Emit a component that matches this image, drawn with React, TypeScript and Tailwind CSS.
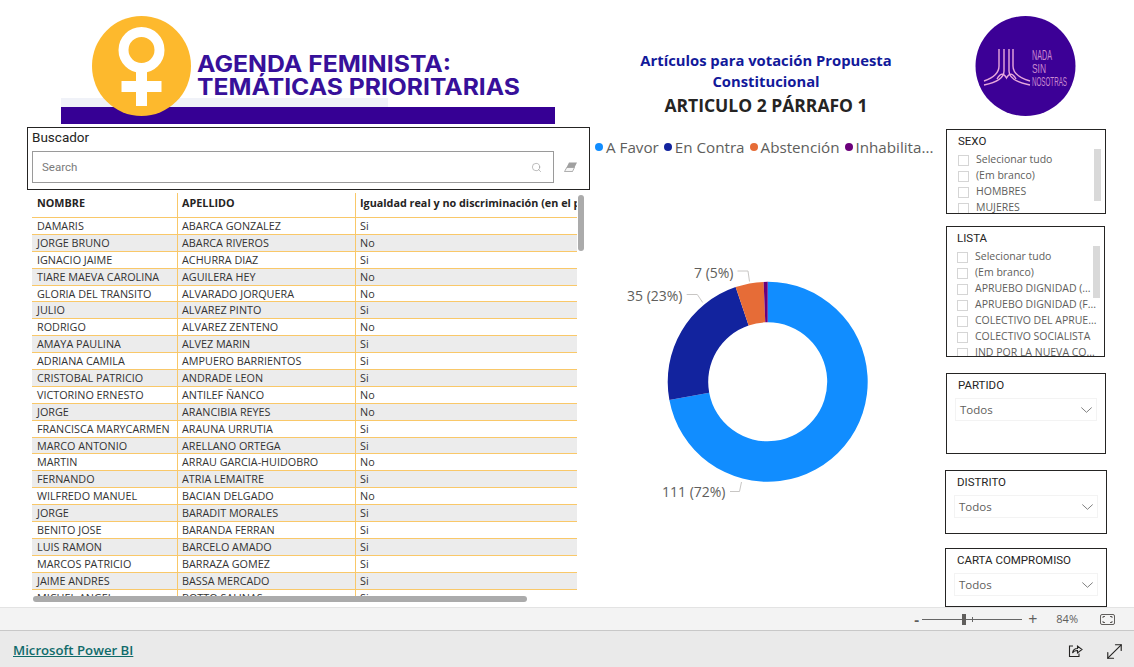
import { MoveDiagonal, Search } from "lucide-react";

const filas = [
  ["DAMARIS", "ABARCA GONZALEZ", "Si"],
  ["JORGE BRUNO", "ABARCA RIVEROS", "No"],
  ["IGNACIO JAIME", "ACHURRA DIAZ", "Si"],
  ["TIARE MAEVA CAROLINA", "AGUILERA HEY", "No"],
  ["GLORIA DEL TRANSITO", "ALVARADO JORQUERA", "No"],
  ["JULIO", "ALVAREZ PINTO", "Si"],
  ["RODRIGO", "ALVAREZ ZENTENO", "No"],
  ["AMAYA PAULINA", "ALVEZ MARIN", "Si"],
  ["ADRIANA CAMILA", "AMPUERO BARRIENTOS", "Si"],
  ["CRISTOBAL PATRICIO", "ANDRADE LEON", "Si"],
  ["VICTORINO ERNESTO", "ANTILEF ÑANCO", "No"],
  ["JORGE", "ARANCIBIA REYES", "No"],
  ["FRANCISCA MARYCARMEN", "ARAUNA URRUTIA", "Si"],
  ["MARCO ANTONIO", "ARELLANO ORTEGA", "Si"],
  ["MARTIN", "ARRAU GARCIA-HUIDOBRO", "No"],
  ["FERNANDO", "ATRIA LEMAITRE", "Si"],
  ["WILFREDO MANUEL", "BACIAN DELGADO", "No"],
  ["JORGE", "BARADIT MORALES", "Si"],
  ["BENITO JOSE", "BARANDA FERRAN", "Si"],
  ["LUIS RAMON", "BARCELO AMADO", "Si"],
  ["MARCOS PATRICIO", "BARRAZA GOMEZ", "Si"],
  ["JAIME ANDRES", "BASSA MERCADO", "Si"],
  ["MICHEL ANGEL", "BOTTO SALINAS", "Si"],
];

const leyenda = [
  { label: "A Favor", color: "bg-[#118dff]" },
  { label: "En Contra", color: "bg-[#12239e]" },
  { label: "Abstención", color: "bg-[#e66c37]" },
  { label: "Inhabilita...", color: "bg-[#6b007b]" },
];

const segmentos = [
  { value: 111, color: "#118dff" },
  { value: 35, color: "#12239e" },
  { value: 7, color: "#e66c37" },
  { value: 1, color: "#6b007b" },
];

function arco(inicio: number, fin: number) {
  const cx = 177.7;
  const cy = 181.8;
  const R = 100;
  const r = 59.5;
  const p = (rad: number, a: number) =>
    `${(cx + rad * Math.sin(a)).toFixed(2)} ${(cy - rad * Math.cos(a)).toFixed(2)}`;
  const large = fin - inicio > Math.PI ? 1 : 0;
  return `M${p(R, inicio)} A${R} ${R} 0 ${large} 1 ${p(R, fin)} L${p(r, fin)} A${r} ${r} 0 ${large} 0 ${p(r, inicio)} Z`;
}

function Donut() {
  const total = 154;
  let acum = 0;
  return (
    <svg width="350" height="340" className="block" style={{ fontFamily: "'Open Sans', sans-serif" }}>
      {segmentos.map((s) => {
        const a = (acum / total) * Math.PI * 2;
        acum += s.value;
        const b = (acum / total) * Math.PI * 2;
        return <path key={s.color} d={arco(a, b)} fill={s.color} />;
      })}
      <g fill="none" stroke="#c8c6c4" strokeWidth="1">
        <path d="M147.500 71 H158 L159.500 81.500" />
        <path d="M96.700 94.500 H107.300 L112.700 102.500" />
        <path d="M140 291.500 H149.500 L151.500 282" />
      </g>
      <g fill="#605e5c" fontSize="14">
        <text x="104" y="78">7 (5%)</text>
        <text x="37" y="100.500">35 (23%)</text>
        <text x="72" y="296.500">111 (72%)</text>
      </g>
    </svg>
  );
}

function Banner() {
  return (
    <svg width="562" height="108" className="block">
      <rect x="34" y="82" width="327" height="10" fill="#f0f2f8" />
      <rect x="34" y="91" width="494" height="17" fill="#360094" />
      <ellipse cx="114.500" cy="50" rx="49.500" ry="50" fill="#fdb92d" />
      <circle cx="114.500" cy="34" r="18" fill="none" stroke="#fff" strokeWidth="10" />
      <rect x="109" y="55" width="11" height="35" fill="#fff" />
      <rect x="94.500" y="65" width="40" height="11" fill="#fff" />
      <g fill="#37109a" fontWeight="700" fontFamily="Inter, sans-serif" fontSize="22.500">
        <text x="170" y="55.500" textLength="254" lengthAdjust="spacingAndGlyphs">AGENDA FEMINISTA:</text>
        <text x="170" y="79" textLength="323" lengthAdjust="spacingAndGlyphs">TEMÁTICAS PRIORITARIAS</text>
      </g>
    </svg>
  );
}

function LogoNada() {
  return (
    <svg width="101" height="100" className="block">
      <circle cx="50.500" cy="50" r="50" fill="#3c0096" />
      <g fill="none" stroke="#e8a8dc" strokeWidth="1.400">
        <path d="M24 33 V50 Q24 60 9 65" />
        <path d="M29 33 V55 Q29 65 9 69" />
        <path d="M34 33 V55 Q34 65 55 69" />
        <path d="M38 33 V50 Q38 60 55 65" />
        <path d="M22 63 Q27 54 31.500 62 Q36 54 41 63" />
      </g>
      <g fill="#c98ad0" fontFamily="'Liberation Sans', sans-serif">
        <text x="57" y="44" fontSize="14" textLength="20" lengthAdjust="spacingAndGlyphs">NADA</text>
        <text x="57" y="57" fontSize="12" textLength="14" lengthAdjust="spacingAndGlyphs">SIN</text>
        <text x="57" y="70" fontSize="12" textLength="35" lengthAdjust="spacingAndGlyphs">NOSOTRAS</text>
      </g>
    </svg>
  );
}

function CheckRow({ label }: { label: string }) {
  return (
    <div className="flex h-4 items-center gap-[7px]">
      <span className="h-[11px] w-[11px] shrink-0 border border-[#d5d5d5]" />
      <span className="whitespace-nowrap text-[10.5px] text-[#605e5c]">{label}</span>
    </div>
  );
}

function Dropdown({ w }: { w: string }) {
  return (
    <div className={`flex h-[23px] items-center justify-between border border-[#f3f3f3] pl-[4px] pr-[4px] text-[11.5px] text-[#605e5c] ${w}`}>
      <span>Todos</span>
      <svg width="11" height="6" viewBox="0 0 11 6" fill="none" stroke="#808080" strokeWidth="1">
        <path d="M0.300 0.500 L5.500 5.300 L10.700 0.500" />
      </svg>
    </div>
  );
}

function Titulo({ children }: { children: string }) {
  return (
    <div className="text-[11.5px] leading-[16px] text-[#252423]" style={{ fontFamily: "Roboto, sans-serif" }}>
      {children}
    </div>
  );
}

export default function App() {
  return (
    <div className="flex h-[667px] w-[1134px] flex-col overflow-hidden bg-white" style={{ fontFamily: "'Open Sans', sans-serif" }}>
      {/* reporte */}
      <div className="flex h-[607px] pl-[27px]">
        {/* columna izquierda */}
        <div className="w-[563px] pt-[16px]">
          <Banner />
          <div className="mt-[3px] h-[63px] border border-[#252423] px-[4px]">
            <div className="text-[13.5px] leading-[18px] text-[#252423]" style={{ fontFamily: "Roboto, sans-serif" }}>Buscador</div>
            <div className="mt-[5px] flex items-center">
              <div className="flex h-[32px] w-[522px] items-center justify-between border border-[#9a9a9a] pl-[9px] pr-[11px] pt-[1px] text-[11.5px] text-[#7a7a7a]" style={{ fontFamily: "Roboto, sans-serif" }}>
                <span>Search</span>
                <Search size={11} strokeWidth={1.2} className="text-[#8a8a8a]" />
              </div>
              <svg width="13" height="10" className="ml-[10px]" viewBox="0 0 13 10">
                <path d="M5 0.500 H13 L8.500 9.500 H0.500 Z" fill="#a0a0a0" />
                <path d="M0.500 9.500 L2.800 5.500 H10.500 L8.500 9.500 Z" fill="#f5f5f5" stroke="#8f8f8f" strokeWidth="0.6" />
              </svg>
            </div>
          </div>
          <div className="relative ml-[5px] mt-[3px] h-[410px] w-[553px] overflow-hidden">
            <div className="h-[403px] w-[545px] overflow-hidden text-[10.8px] text-[#333]">
              <div className="flex h-[25px] items-center border-b border-[#f9c869] font-bold text-[#252423]">
                <div className="h-full w-[145px] pl-[5px] leading-[20px]">NOMBRE</div>
                <div className="h-full w-[178px] border-l border-[#f9c869] pl-[4px] leading-[20px]">APELLIDO</div>
                <div className="h-full flex-1 overflow-hidden whitespace-nowrap border-l border-[#f9c869] pl-[4px] leading-[20px]">Igualdad real y no discriminación (en el pleno ejercicio)</div>
              </div>
              {filas.map((f, i) => (
                <div key={i} className={`flex h-[16.9px] items-center border-b border-[#f9c869] ${i % 2 ? "bg-[#ececec]" : "bg-white"}`}>
                  <div className="h-full w-[145px] overflow-hidden whitespace-nowrap pl-[5px] leading-[15.9px]">{f[0]}</div>
                  <div className="h-full w-[178px] border-l border-[#f9c869] pl-[4px] leading-[15.9px]">{f[1]}</div>
                  <div className="h-full flex-1 border-l border-[#f9c869] pl-[4px] leading-[15.9px]">{f[2]}</div>
                </div>
              ))}
            </div>
            {/* barras de desplazamiento */}
            <div className="absolute left-[546px] top-[2px] h-[56px] w-[6px] rounded-full bg-[#ababab]" />
            <div className="absolute bottom-[1px] left-[1px] h-[6px] w-[494px] rounded-full bg-[#ababab]" />
          </div>
        </div>

        {/* columna central */}
        <div className="w-[356px] pt-[50px]">
          <div className="ml-[-4px] text-center">
            <div className="text-[14.8px] font-bold leading-[21px] text-[#12199a]">
              Artículos para votación Propuesta
              <br />
              Constitucional
            </div>
            <div className="mt-[1px] text-[17.5px] font-bold leading-[25px] text-[#252423]">ARTICULO 2 PÁRRAFO 1</div>
          </div>
          <div className="mt-[18px] flex h-[22px] items-center gap-[5px] whitespace-nowrap pl-[5px] text-[15.2px] text-[#605e5c]">
            {leyenda.map((l) => (
              <div key={l.label} className="flex items-center gap-[3px]">
                <span className={`h-[8px] w-[8px] rounded-full ${l.color}`} />
                <span>{l.label}</span>
              </div>
            ))}
          </div>
          <div className="mt-[42px]">
            <Donut />
          </div>
        </div>

        {/* columna derecha */}
        <div className="w-[161px] pt-[16px]">
          <div className="ml-[29px]">
            <LogoNada />
          </div>
          <div className="relative mt-[13px] h-[85px] w-[160px] overflow-hidden border border-[#252423] pl-[11px] pt-[3px]">
            <Titulo>SEXO</Titulo>
            <div className="mt-[3px]">
              {["Selecionar tudo", "(Em branco)", "HOMBRES", "MUJERES"].map((t) => (
                <CheckRow key={t} label={t} />
              ))}
            </div>
            <div className="absolute left-[147px] top-[19px] h-[52px] w-[7px] bg-[#d9d9d9]" />
          </div>
          <div className="relative mt-[12px] h-[131px] w-[159px] overflow-hidden border border-[#252423] pl-[10px] pt-[3px]">
            <Titulo>LISTA</Titulo>
            <div className="mt-[3px]">
              {["Selecionar tudo", "(Em branco)", "APRUEBO DIGNIDAD (...", "APRUEBO DIGNIDAD (F...", "COLECTIVO DEL APRUE...", "COLECTIVO SOCIALISTA", "IND POR LA NUEVA CO..."].map((t) => (
                <CheckRow key={t} label={t} />
              ))}
            </div>
            <div className="absolute left-[146px] top-[19px] h-[52px] w-[7px] bg-[#d9d9d9]" />
          </div>
          <div className="mt-[16px] h-[81px] w-[160px] border border-[#252423] pl-[8px] pt-[3px]">
            <div className="pl-[3px]"><Titulo>PARTIDO</Titulo></div>
            <div className="mt-[5px]"><Dropdown w="w-[142px]" /></div>
          </div>
          <div className="ml-[-1px] mt-[16px] h-[64px] w-[162px] border border-[#252423] pl-[8px] pt-[3px]">
            <div className="pl-[3px]"><Titulo>DISTRITO</Titulo></div>
            <div className="mt-[5px]"><Dropdown w="w-[144px]" /></div>
          </div>
          <div className="ml-[-1px] mt-[14px] h-[59px] w-[162px] border border-[#252423] pl-[8px] pt-[3px]">
            <div className="pl-[3px]"><Titulo>CARTA COMPROMISO</Titulo></div>
            <div className="mt-[5px]"><Dropdown w="w-[144px]" /></div>
          </div>
        </div>
      </div>

      {/* barra de zoom */}
      <div className="flex h-[24px] items-center justify-end border-y border-b-[#c8c8c8] border-t-[#e3e3e3] bg-[#f3f3f3] pr-[19px] text-[#605e5c]">
        <span className="text-[15px] font-bold leading-none">-</span>
        <div className="relative ml-[3px] mr-[5px] h-px w-[100px] bg-[#666]">
          <div className="absolute left-[40px] top-[-5px] h-[11px] w-[4px] bg-[#605e5c]" />
          <div className="absolute left-[50px] top-[-2px] h-[5px] w-px bg-[#666]" />
        </div>
        <span className="ml-[1px] text-[16px] leading-none">+</span>
        <span className="ml-[19px] text-[11px]">84%</span>
        <svg width="15" height="11" viewBox="0 0 15 11" fill="none" stroke="#605e5c" strokeWidth="1" className="ml-[22px]">
          <rect x="0.500" y="0.500" width="14" height="10" rx="1.500" />
          <path d="M3 4 V2.500 H5 M10 2.500 H12 V4 M3 7 V8.500 H5 M10 8.500 H12 V7" />
        </svg>
      </div>

      {/* pie */}
      <div className="flex flex-1 items-center justify-between bg-[#eaeaea] pl-[13px] pr-[8px] pt-[4px]">
        <a href="#" className="text-[13.2px] font-semibold text-[#106b6b] underline">Microsoft Power BI</a>
        <div className="flex items-center gap-[20px]">
          <svg width="15" height="14" viewBox="0 0 15 14" fill="none" stroke="#252423" strokeWidth="1.100">
            <path d="M5 2 H1.500 V12.500 H11 V9.500" />
            <path d="M4.500 9 C5 5.500 7.500 4.500 9.500 4.500 V2 L14 5.500 L9.500 9 V6.500 C7.500 6.500 5.500 7 4.500 9 Z" />
          </svg>
          <MoveDiagonal size={23} strokeWidth={1.200} className="text-[#252423]" />
        </div>
      </div>
    </div>
  );
}
